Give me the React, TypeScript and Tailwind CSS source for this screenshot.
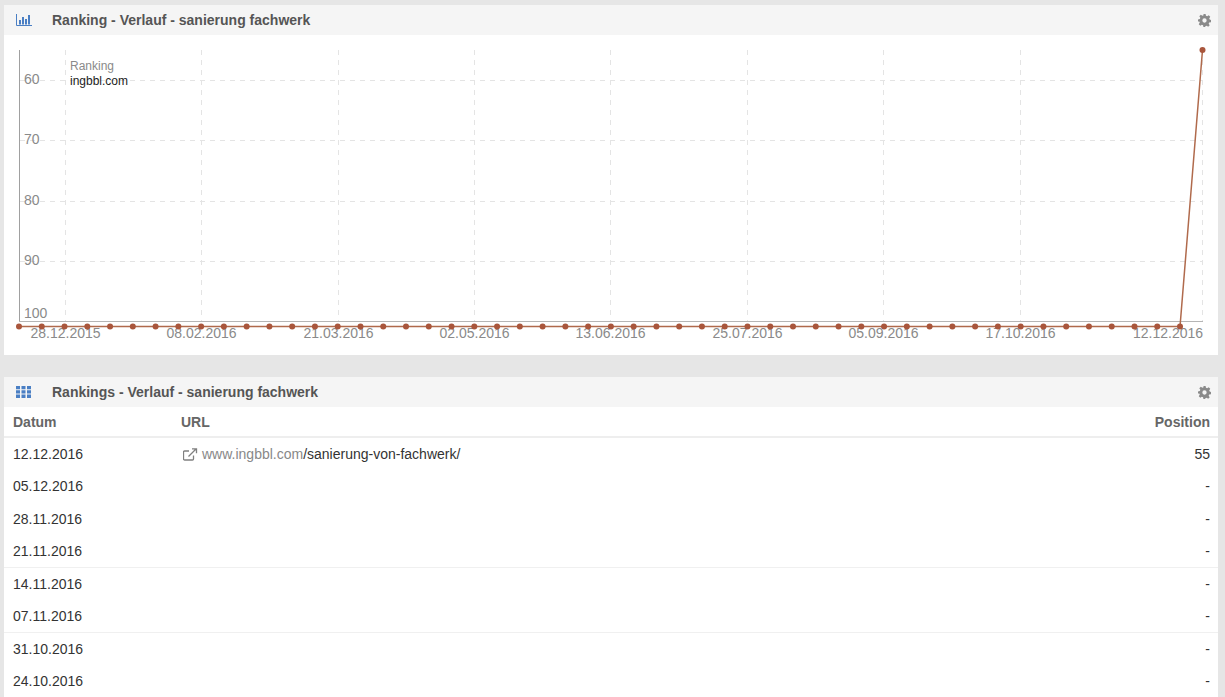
const F = "font-['Liberation_Sans',Arial,sans-serif]";

function BarIcon() {
  return (
    <svg width="16" height="12" viewBox="0 0 16 12" className="block">
      <path d="M0.5 0v11.5H16" fill="none" stroke="#4a7fc4" strokeWidth="1" />
      <path d="M3 6h2v4.500H3zM6 3h2v7.500H6zM9 5h2v5.500H9zM12 1h2v9.500h-2z" fill="#4a7fc4" />
    </svg>
  );
}

function GridIcon() {
  return (
    <svg width="15" height="12" viewBox="0 0 15 12" className="block">
      <path
        d="M0 0h4v3.300H0zM5.500 0h4v3.300h-4zM11 0h4v3.300h-4zM0 4.300h4v3.300H0zM5.500 4.300h4v3.300h-4zM11 4.300h4v3.300h-4zM0 8.600h4V12H0zM5.500 8.600h4V12h-4zM11 8.600h4V12h-4z"
        fill="#4a7fc4"
      />
    </svg>
  );
}

function Gear() {
  return (
    <svg width="13" height="13" viewBox="0 0 24 24" className="block">
      <path
        fill="#8a8a8a"
        fillRule="evenodd"
        d="M10 0h4l.7 3.400 2.200.9L19.800 2.400l2.800 2.800-1.900 2.900.9 2.200L24 11v4l-3.400.7-.9 2.200 1.900 2.900-2.800 2.800-2.900-1.900-2.200.9L13 24h-3l-.7-3.400-2.200-.9-2.900 1.900-2.800-2.800 1.900-2.900-.9-2.200L0 14v-4l3.400-.7.9-2.200L2.400 4.200l2.800-2.800 2.900 1.900 2.200-.9zM12 8a4 4 0 1 0 0 8 4 4 0 0 0 0-8z"
      />
    </svg>
  );
}

function Header({ icon, title }: { icon: React.ReactNode; title: string }) {
  return (
    <div className="flex h-[30px] items-center bg-[#f5f5f5] pl-3 pr-[7px]">
      <div className="w-[36px]">{icon}</div>
      <div className="flex-1 text-[14px] font-bold text-[#555555]">{title}</div>
      <Gear />
    </div>
  );
}

const TICKS: [number, string][] = [
  [65, "28.12.2015"],
  [201, "08.02.2016"],
  [338, "21.03.2016"],
  [474, "02.05.2016"],
  [610, "13.06.2016"],
  [747, "25.07.2016"],
  [883, "05.09.2016"],
  [1020, "17.10.2016"],
];

function Chart() {
  const pts = Array.from({ length: 52 }, (_, i) => [19 + i * 22.765, 326.6]);
  pts.push([1202.5, 50]);
  return (
    <svg width="1214" height="320" viewBox="4 35 1214 320" className="block">
      {[...TICKS.map((t) => t[0]), 1202].map((x) => (
        <line key={x} x1={x + 0.5} x2={x + 0.5} y1={50} y2={322} stroke="#e4e4e4" strokeDasharray="5 5" />
      ))}
      {[80, 140, 201, 261].map((y) => (
        <line key={y} x1={20} x2={1202} y1={y + 0.5} y2={y + 0.5} stroke="#e4e4e4" strokeDasharray="5 5" />
      ))}
      <line x1={19.5} x2={19.5} y1={50} y2={322} stroke="#a0a0a0" />
      <line x1={19} x2={1203} y1={321.5} y2={321.5} stroke="#b5b5b5" />
      {[
        [60, 84],
        [70, 144],
        [80, 205],
        [90, 265],
      ].map(([v, y]) => (
        <text key={v} x={24} y={y} fontSize="14" fill="#8a8a8a" fontFamily="Liberation Sans, Arial, sans-serif">
          {v}
        </text>
      ))}
      <text x={24} y={318} fontSize="14" fill="#8a8a8a" fontFamily="Liberation Sans, Arial, sans-serif">
        100
      </text>
      {TICKS.map(([x, l]) => (
        <text key={l} x={x + 0.5} y={338} fontSize="14" textAnchor="middle" fill="#8a8a8a" fontFamily="Liberation Sans, Arial, sans-serif">
          {l}
        </text>
      ))}
      <text x={1168} y={338} fontSize="14" textAnchor="middle" fill="#8a8a8a" fontFamily="Liberation Sans, Arial, sans-serif">
        12.12.2016
      </text>
      <text x={70} y={70} fontSize="12" fill="#8a8a8a" fontFamily="Liberation Sans, Arial, sans-serif">
        Ranking
      </text>
      <text x={70} y={85} fontSize="12" fill="#222222" fontFamily="Liberation Sans, Arial, sans-serif">
        ingbbl.com
      </text>
      <polyline points={pts.map((p) => p.join(",")).join(" ")} fill="none" stroke="#b06a4c" strokeWidth="1.5" />
      {pts.map(([x, y]) => (
        <circle key={x} cx={x} cy={y} r="3" fill="#a9563c" />
      ))}
    </svg>
  );
}

const ROWS: [string, boolean][] = [
  ["12.12.2016", false],
  ["05.12.2016", false],
  ["28.11.2016", false],
  ["21.11.2016", true],
  ["14.11.2016", false],
  ["07.11.2016", true],
  ["31.10.2016", false],
  ["24.10.2016", false],
];

export default function App() {
  return (
    <div className={`${F} h-[697px] w-[1225px] overflow-hidden bg-[#e6e6e6] pl-[4px] pr-[7px] pt-[5px]`}>
      <section className="h-[350px] bg-white">
        <Header icon={<BarIcon />} title="Ranking - Verlauf - sanierung fachwerk" />
        <Chart />
      </section>
      <section className="mt-[22px] bg-white">
        <Header icon={<GridIcon />} title="Rankings - Verlauf - sanierung fachwerk" />
        <div className="flex h-[31px] items-center border-b-2 border-[#eeeeee] pl-[9px] pr-2 pt-[2px] text-[14px] font-bold text-[#666666]">
          <div className="w-[168px]">Datum</div>
          <div className="flex-1">URL</div>
          <div>Position</div>
        </div>
        {ROWS.map(([d, b], i) => (
          <div
            key={d}
            className={`flex h-[32.5px] items-center pl-[9px] pr-2 text-[14px] text-[#333333] ${b ? "border-b border-[#f0f0f0]" : ""}`}
          >
            <div className="w-[170px]">{d}</div>
            <div className="flex flex-1 items-center">
              {i === 0 && (
                <>
                  <svg width="15" height="13" viewBox="0 0 15 13" className="mr-[4px] block" fill="none" stroke="#808080" strokeWidth="1.3">
                    <path d="M10.500 7.500v3.500a1 1 0 0 1-1 1H1.500a1 1 0 0 1-1-1V4a1 1 0 0 1 1-1H6" />
                    <path d="M5.500 8.500L13 1M9 .8h4.500v4.500" />
                  </svg>
                  <span className="text-[#888888]">www.ingbbl.com</span>
                  <span>/sanierung-von-fachwerk/</span>
                </>
              )}
            </div>
            <div>{i === 0 ? "55" : "-"}</div>
          </div>
        ))}
      </section>
    </div>
  );
}
